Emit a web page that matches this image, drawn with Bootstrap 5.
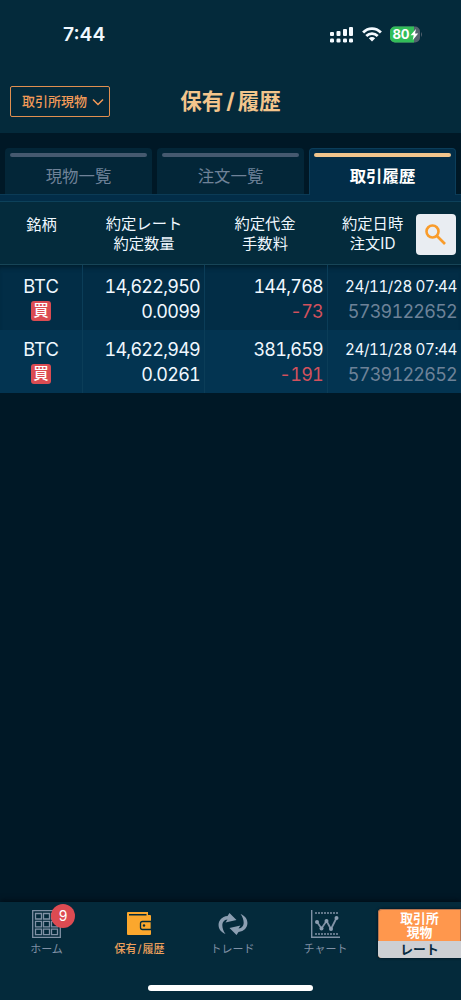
<!DOCTYPE html>
<html lang="ja">
<head>
    <meta charset="UTF-8">
    <meta name="viewport" content="width=device-width, initial-scale=1.0">
    <title>保有/履歴</title>
    <link rel="stylesheet" href="https://cdn.jsdelivr.net/npm/bootstrap@5.3.0/dist/css/bootstrap.min.css">
    <style>
        body {
            height: 1000px;
            overflow: hidden;
            background: #001826;
            color: #f0f8ff;
            font-family: Inter, "Noto Sans CJK JP", sans-serif;
            line-height: 1;
        }
        svg { display: block; flex: none; }

        /* Status bar and title */
        .app-head { height: 133px; background: #042a3b; }
        .status-line { height: 69px; padding: 0 38px 0 63px; }
        .clock { font-size: 19.3px; font-weight: 600; }
        .title-line { display: grid; grid-template-columns: 100px 1fr 100px; padding: 17px 10px 0; }
        .market-btn {
            height: 31px;
            padding: 0 5px 0 11px;
            border: 1px solid #e18f50;
            border-radius: 2px;
            color: #f39a58;
            font-size: 13px;
            font-weight: 500;
            line-height: 1;
            white-space: nowrap;
        }
        .page-title { margin: 0; color: #f3c58c; font-size: 21.5px; font-weight: 700; }
        .page-title span { padding: 0 3px; }

        /* Tabs */
        .tab-line { height: 62px; padding: 15px 5px 0; gap: 5px; border-bottom: 1px solid #0b3b56; }
        .tab-line .nav-link {
            height: 46px;
            padding: 5px 5px 0;
            border-radius: 4px 4px 0 0;
            background: #032638;
            color: #6f8298;
            font-size: 16.4px;
            line-height: 1;
        }
        .tab-line .nav-link::before {
            content: "";
            display: block;
            height: 4px;
            margin-bottom: 11px;
            border-radius: 2px;
            background: #45596f;
        }
        .tab-line .nav-link.active {
            height: 48px;
            border: 1px solid #0b3d5a;
            border-bottom: 0;
            padding: 4px 4px 0;
            background: #022d48;
            color: #fff;
            font-weight: 700;
        }
        .tab-line .nav-link.active::before { background: #f1c58d; }
        .tab-foot { height: 7px; background: #022d48; border-bottom: 1px solid #0d415a; }

        /* Trade table */
        .trade-row { display: grid; grid-template-columns: 83px 122px 123px 1fr; }
        .trade-head {
            height: 63px;
            background: #042b3c;
            border-bottom: 1px solid #174557;
            font-size: 15.3px;
            line-height: 20px;
            text-align: center;
        }
        .trade-head > div { padding-top: 12px; }
        .trade-head > div:first-child { padding-top: 13px; }
        .trade-head > div:nth-child(3) { padding-right: 3px; }
        .trade-head > div:last-child { padding: 12px 5px 0 14px; }
        .search-btn { width: 40px; height: 41px; border-radius: 4px; background: #e9edf2; }
        .trade-item {
            height: 65px;
            background: #022d46;
            font-size: 18px;
            font-variant-numeric: tabular-nums;
            letter-spacing: -.75px;
            line-height: 25px;
        }
        .trade-item:nth-child(even) { height: 63px; background: #033451; }
        .trade-item > div { padding: 9px 4px 0 0; border-right: 1px solid #0b3d58; text-align: right; white-space: nowrap; }
        .trade-item > div:first-child { padding-right: 0; font-size: 18.4px; letter-spacing: 0; text-align: center; }
        .trade-item > div:last-child { border: 0; }
        .trade-item:nth-child(even) > div { padding-top: 7px; }
        .first-shade { box-shadow: inset 0 5px 5px -3px #001c2b; }
        .buy-tag {
            width: 20px;
            height: 20px;
            margin: 2px auto 0;
            border-radius: 3px;
            background: #db4c52;
            color: #fff;
            font-size: 15.5px;
            font-weight: 500;
            line-height: 20px;
        }
        .fee { color: #d2515d; }
        .trade-date { font-size: 15.2px; letter-spacing: -.4px; }
        .order-id { color: #6d8298; }

        /* Bottom bar */
        .bottom-bar { height: 98px; background: #042a3b; box-shadow: 0 -2px 5px #000e19; }
        .bottom-bar .bar-item { width: 93px; padding-top: 8px; color: #8091a5; font-size: 11px; }
        .bar-item svg { margin-bottom: 6px; }
        .bottom-bar .bar-item.current { color: #eda05c; font-weight: 500; }
        .current span span { padding: 0 1px; }
        .count-badge {
            position: absolute;
            top: 2px;
            left: 51px;
            width: 24px;
            height: 24px;
            border-radius: 50%;
            background: #dc4b52;
            color: #fff;
            font-size: 14px;
        }
        .rate-btn {
            width: 83px;
            height: 49px;
            margin: 7px 0 0 6px;
            overflow: hidden;
            border-radius: 4px 0 0 4px;
            background: #ff974d;
            box-shadow: inset 0 0 0 1px #b87550, 0 0 3px #000d18;
            font-size: 12.8px;
            font-weight: 700;
            line-height: 14px;
            text-align: center;
        }
        .rate-market { height: 32px; padding-top: 3px; }
        .rate-label { height: 17px; background: #cdcfd3; color: #072b3f; line-height: 17px; }
        .home-line { position: absolute; left: 148px; bottom: 9px; width: 165px; height: 6px; border-radius: 3px; background: #fff; }
    </style>
</head>
<body class="d-flex flex-column">
    <header class="app-head">
        <div class="status-line d-flex align-items-center justify-content-between">
            <span class="clock">7:44</span>
            <div class="d-flex align-items-center gap-2">
                <svg width="24" height="17" fill="#f4faff">
                    <rect y="6" width="4" height="4" rx="1"/><rect x="6.5" y="5" width="4" height="5" rx="1"/>
                    <rect x="13" y="3" width="4" height="7" rx="1"/><rect x="19" y="1" width="4" height="9" rx="1"/>
                    <rect y="12.5" width="4" height="4" rx="1.2"/><rect x="6.5" y="12.5" width="4" height="4" rx="1.2"/>
                    <rect x="13" y="12.5" width="4" height="4" rx="1.2"/><rect x="19" y="12.5" width="4" height="4" rx="1.2"/>
                </svg>
                <svg width="20" height="15" viewBox="0 0 20 15" fill="none" stroke="#f4faff" stroke-width="2.8">
                    <path d="M1.1 5.5C6.2.3 13.8.3 18.9 5.5M4.3 9.1c3.3-3.2 8.1-3.2 11.4 0"/>
                    <path d="M6.8 11.3c1.8-1.6 4.6-1.6 6.4 0L10 14.6z" fill="#f4faff" stroke="none"/>
                </svg>
                <svg width="33" height="17" viewBox="0 0 33 17">
                    <rect x="0" y=".5" width="30" height="16" rx="5" fill="#53616d"/>
                    <path d="M5 .5h19v16H5a5 5 0 0 1-5-5v-6a5 5 0 0 1 5-5z" fill="#32bd59"/>
                    <path d="M31 6q2 2.5 0 5z" fill="#53616d"/>
                    <text x="2.4" y="13.2" font-family="Inter" font-size="13" font-weight="700" fill="#fff">80</text>
                    <path d="M26 3 20.5 9.3h3.2l-1 5 5.5-6.8H25z" fill="#fff"/>
                </svg>
            </div>
        </div>
        <div class="title-line">
            <button class="market-btn btn d-flex align-items-center justify-content-between">取引所現物
                <svg width="12" height="8" fill="none" stroke="#f39a58" stroke-width="1.5"><path d="M1 1.5 6 6.5l5-5"/></svg>
            </button>
            <h1 class="page-title d-flex align-items-center justify-content-center">保有<span>/</span>履歴</h1>
        </div>
    </header>

    <nav class="tab-line nav nav-fill flex-nowrap">
        <a class="nav-link w-100" href="#">現物一覧</a>
        <a class="nav-link w-100" href="#">注文一覧</a>
        <a class="nav-link w-100 active" href="#">取引履歴</a>
    </nav>
    <div class="tab-foot"></div>

    <main class="flex-grow-1">
        <div class="trade-row trade-head">
            <div>銘柄</div>
            <div>約定レート<br>約定数量</div>
            <div>約定代金<br>手数料</div>
            <div class="d-flex justify-content-between">
                <span>約定日時<br>注文ID</span>
                <button class="search-btn btn p-0 d-flex align-items-center justify-content-center">
                    <svg width="22" height="22" fill="none" stroke="#f99c2b" stroke-width="2.6"><circle cx="7.5" cy="7.5" r="6"/><path d="m12 12 8 8"/></svg>
                </button>
            </div>
        </div>
        <div id="tradeList"></div>
    </main>

    <footer class="bottom-bar position-relative d-flex">
        <a class="bar-item position-relative d-flex flex-column align-items-center text-decoration-none" href="#">
            <svg width="29" height="28" fill="none" stroke="#8091a5" stroke-width="1.3">
                <path d="M.7.7h27.600v26.600H.7z"/>
                <path d="M3.500 3.500h6v5.500h-6zM11.500 3.500h6v5.500h-6zM19.500 3.500h6v5.500h-6zM3.500 11.300h6v5.500h-6zM11.500 11.300h6v5.500h-6zM19.500 11.300h6v5.500h-6zM3.500 19.200h6v5.500h-6zM11.500 19.200h6v5.500h-6zM19.500 19.200h6v5.500h-6z"/>
            </svg>
            ホーム
            <span class="count-badge d-flex align-items-center justify-content-center">9</span>
        </a>
        <a class="bar-item current d-flex flex-column align-items-center text-decoration-none" href="#">
            <svg width="25" height="28" viewBox="0 0 25 28">
                <path d="M1 2h20v3h2q1 0 1 1v18q0 1-1 1H1q-1 0-1-1V3q0-1 1-1z" fill="#fba72d"/>
                <path d="M2 4h17.500v1.500H2z" fill="#042a3b"/>
                <path d="M24.300 11.500H15.500q-2 0-2 2v4q0 2 2 2h8.800z" fill="#fba72d" stroke="#042a3b" stroke-width="1.300"/>
                <circle cx="17" cy="15.500" r="1.200" fill="#042a3b"/>
            </svg>
            <span>保有<span>/</span>履歴</span>
        </a>
        <a class="bar-item d-flex flex-column align-items-center text-decoration-none" href="#">
            <svg width="30" height="28" viewBox="-15 -14 30 28" fill="#8c9eb1">
                <path id="turnArrow" d="M-7.500 10C-18 6-16-7-5.500-8L-3.500-11 3.500-4-7.500-1.500-5.500-4.500C-12-4-12 4-7.500 10z"/>
                <use href="#turnArrow" transform="rotate(180)"/>
            </svg>
            トレード
        </a>
        <a class="bar-item d-flex flex-column align-items-center text-decoration-none" href="#">
            <svg width="29" height="28" fill="none" stroke="#8091a5">
                <path d="M.7 0v27.300H29" stroke-width="1.4"/>
                <path d="M4 3h24M4 24h24" stroke-width="1.5" stroke-dasharray="2 1"/>
                <path d="m6 12 4.500 6.500 5-7.500 4.500 8 5.500-11" stroke-width="1.8"/>
                <g fill="#8c9eb1" stroke="none"><circle cx="6" cy="12" r="2"/><circle cx="10.500" cy="18.500" r="2"/><circle cx="15.500" cy="11" r="2"/><circle cx="20" cy="19" r="2"/><circle cx="25.500" cy="8" r="2"/></g>
            </svg>
            チャート
        </a>
        <button class="rate-btn d-flex flex-column align-items-stretch border-0 p-0 text-white">
            <div class="rate-market">取引所<br>現物</div>
            <div class="rate-label">レート</div>
        </button>
        <div class="home-line"></div>
    </footer>

    <script src="https://cdn.jsdelivr.net/npm/bootstrap@5.3.0/dist/js/bootstrap.bundle.min.js"></script>
    <script>
        const trades = [
            { rate: "14,622,950", amount: "0.0099", total: "144,768", fee: "-73", date: "24/11/28 07:44", order: "5739122652" },
            { rate: "14,622,949", amount: "0.0261", total: "381,659", fee: "-191", date: "24/11/28 07:44", order: "5739122652" }
        ];

        // Fill the trade list
        const list = document.getElementById("tradeList");
        trades.forEach((item, i) => {
            list.innerHTML += `<div class="trade-row trade-item ${i === 0 ? "first-shade" : ""}">
                <div>BTC<div class="buy-tag">買</div></div>
                <div>${item.rate}<br>${item.amount}</div>
                <div>${item.total}<br><span class="fee">${item.fee}</span></div>
                <div><div class="trade-date">${item.date}</div><div class="order-id">${item.order}</div></div>
            </div>`;
        });
    </script>
</body>
</html>
